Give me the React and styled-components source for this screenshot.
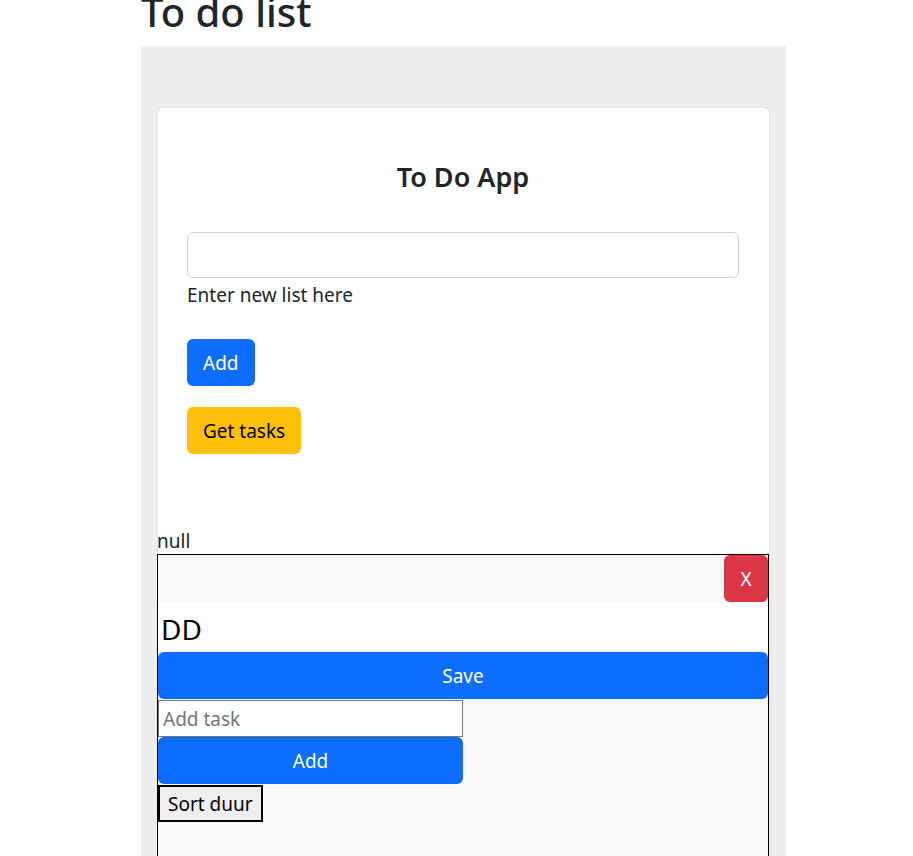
import React from "react";
import styled, { createGlobalStyle } from "styled-components";

const Global = createGlobalStyle`
  body {
    margin: 0;
    background: #fff;
    font-family: "Noto Sans", "Open Sans", sans-serif;
    color: #212529;
    overflow: hidden;
  }
`;

const Page = styled.div`
  width: 645px;
  margin-left: 141px;
`;

const Heading = styled.h1`
  margin: -12px 0 0;
  font-size: 40px;
  font-weight: 500;
  line-height: 48px;
  height: 58px;
`;

const Section = styled.div`
  background: #eee;
  padding: 61px 16px 0;
  min-height: 820px;
`;

const Card = styled.div`
  background: #fff;
  border: 1px solid #dee2e6;
  border-bottom: none;
  border-radius: 6px 6px 0 0;
  min-height: 760px;
`;

const CardBody = styled.div`
  padding: 53px 30px 74px 29px;
`;

const Title = styled.h3`
  margin: 0 0 40px;
  text-align: center;
  font-size: 27px;
  font-weight: 600;
  line-height: 31px;
`;

const TextInput = styled.input`
  display: block;
  box-sizing: border-box;
  width: 100%;
  height: 46px;
  border: 1px solid #ced4da;
  border-radius: 6px;
  font: inherit;
  padding: 0 14px;
`;

const Help = styled.div`
  font-size: 19px;
  line-height: 28px;
  margin-top: 3px;
  margin-bottom: 30px;
`;

const Button = styled.button`
  display: block;
  box-sizing: border-box;
  height: 47px;
  padding: 0 ${(p) => (p.$wide ? 0 : "16px")};
  width: ${(p) => p.$width || "auto"};
  border: none;
  border-radius: 6px;
  background: ${(p) => p.$bg};
  color: ${(p) => p.$fg || "#fff"};
  font-family: inherit;
  font-size: 19px;
  margin-bottom: ${(p) => p.$mb || 0}px;
`;

const Null = styled.div`
  font-size: 19px;
  line-height: 26px;
  margin-left: -1px;
`;

const ListBox = styled.div`
  margin-left: -1px;
  border: 1px solid #000;
  background: #f8f8f8;
  min-height: 320px;
`;

const ListHeader = styled.div`
  display: flex;
  justify-content: flex-end;
  height: 47px;
`;

const ListName = styled.div`
  background: #fff;
  height: 50px;
  font-size: 28px;
  line-height: 54px;
  color: #000;
  padding-left: 3px;
`;

const TaskInput = styled.input`
  display: block;
  box-sizing: border-box;
  width: 50%;
  height: 37px;
  border: 1px solid #767676;
  font-family: inherit;
  font-size: 19px;
  padding: 0 4px;
  margin: 1px 0 0;
  &::placeholder {
    color: #757575;
  }
`;

const SortButton = styled.button`
  display: block;
  height: 37px;
  margin-top: 1px;
  padding: 0 8px;
  border: 2px solid #000;
  background: #efefef;
  color: #000;
  font-family: inherit;
  font-size: 19px;
`;

export default function App() {
  return (
    <Page>
      <Global />
      <Heading>To do list</Heading>
      <Section>
        <Card>
          <CardBody>
            <Title>To Do App</Title>
            <TextInput />
            <Help>Enter new list here</Help>
            <Button $bg="#0d6efd" $mb={21}>Add</Button>
            <Button $bg="#ffc107" $fg="#000">Get tasks</Button>
          </CardBody>
          <Null>null</Null>
          <ListBox>
            <ListHeader>
              <Button $bg="#dc3545" $width="44px" $wide>X</Button>
            </ListHeader>
            <ListName>DD</ListName>
            <Button $bg="#0d6efd" $width="100%" $wide>Save</Button>
            <TaskInput placeholder="Add task" />
            <Button $bg="#0d6efd" $width="50%" $wide>Add</Button>
            <SortButton>Sort duur</SortButton>
          </ListBox>
        </Card>
      </Section>
    </Page>
  );
}
